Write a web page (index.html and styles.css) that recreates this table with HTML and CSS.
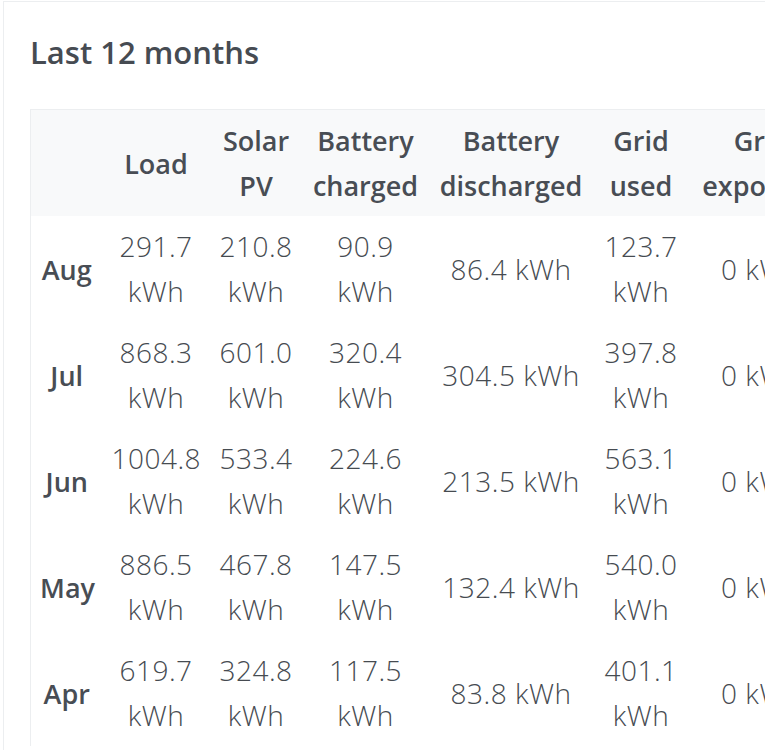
FILE: index.html
```html
<!DOCTYPE html>
<html lang="en">
<head>
<meta charset="utf-8">
<title>Last 12 months</title>
<link rel="stylesheet" href="styles.css">
</head>
<body>
<div class="card">
  <h2 class="card-title">Last 12 months</h2>
  <div class="table-wrap">
    <table class="stats">
      <colgroup>
        <col class="c-month"><col class="c-load"><col class="c-solar"><col class="c-bchg"><col class="c-bdis"><col class="c-gused"><col class="c-gexp">
      </colgroup>
      <thead>
        <tr>
          <th></th>
          <th>Load</th>
          <th>Solar PV</th>
          <th>Battery charged</th>
          <th>Battery discharged</th>
          <th>Grid used</th>
          <th>Grid exported</th>
        </tr>
      </thead>
      <tbody>
        <tr><th>Aug</th><td>291.7 kWh</td><td>210.8 kWh</td><td>90.9 kWh</td><td>86.4 kWh</td><td>123.7 kWh</td><td>0 kWh</td></tr>
        <tr><th>Jul</th><td>868.3 kWh</td><td>601.0 kWh</td><td>320.4 kWh</td><td>304.5 kWh</td><td>397.8 kWh</td><td>0 kWh</td></tr>
        <tr><th>Jun</th><td>1004.8 kWh</td><td>533.4 kWh</td><td>224.6 kWh</td><td>213.5 kWh</td><td>563.1 kWh</td><td>0 kWh</td></tr>
        <tr><th>May</th><td>886.5 kWh</td><td>467.8 kWh</td><td>147.5 kWh</td><td>132.4 kWh</td><td>540.0 kWh</td><td>0 kWh</td></tr>
        <tr><th>Apr</th><td>619.7 kWh</td><td>324.8 kWh</td><td>117.5 kWh</td><td>83.8 kWh</td><td>401.1 kWh</td><td>0 kWh</td></tr>
      </tbody>
    </table>
  </div>
</div>
</body>
</html>
```
FILE: styles.css
```css
html, body {
  margin: 0;
  padding: 0;
  overflow: hidden;
  background: #ffffff;
}
body {
  font-family: "Open Sans", "Noto Sans", sans-serif;
  color: #474c53;
}
.card {
  box-sizing: border-box;
  width: 900px;
  margin: 1px 0 0 3px;
  border: 1px solid #eceef0;
  padding: 32px 0 40px 26px;
  background: #fff;
}
.card-title {
  margin: 0 0 39px 0;
  font-size: 31px;
  line-height: 36px;
  font-weight: 600;
  color: #464b52;
}
.table-wrap {
  overflow: hidden;
}
.stats {
  border-collapse: collapse;
  table-layout: fixed;
  width: 804px;
  border-left: 1px solid #eceef0;
  border-top: 1px solid #eceef0;
}
.c-month { width: 72px; }
.c-load { width: 107px; }
.c-solar { width: 93px; }
.c-bchg { width: 126px; }
.c-bdis { width: 165px; }
.c-gused { width: 95px; }
.c-gexp { width: 146px; }
.stats th,
.stats td {
  padding: 8px 9px;
  line-height: 45px;
  text-align: center;
  vertical-align: middle;
}
.stats th {
  font-size: 27px;
  font-weight: 600;
  color: #484d54;
}
.stats thead tr {
  background: #f8f9fa;
}
.stats td {
  font-family: "Open Sans", "Noto Sans", sans-serif;
  font-size: 28px;
  font-weight: 300;
  letter-spacing: 0.5px;
  color: #464b51;
}
```
